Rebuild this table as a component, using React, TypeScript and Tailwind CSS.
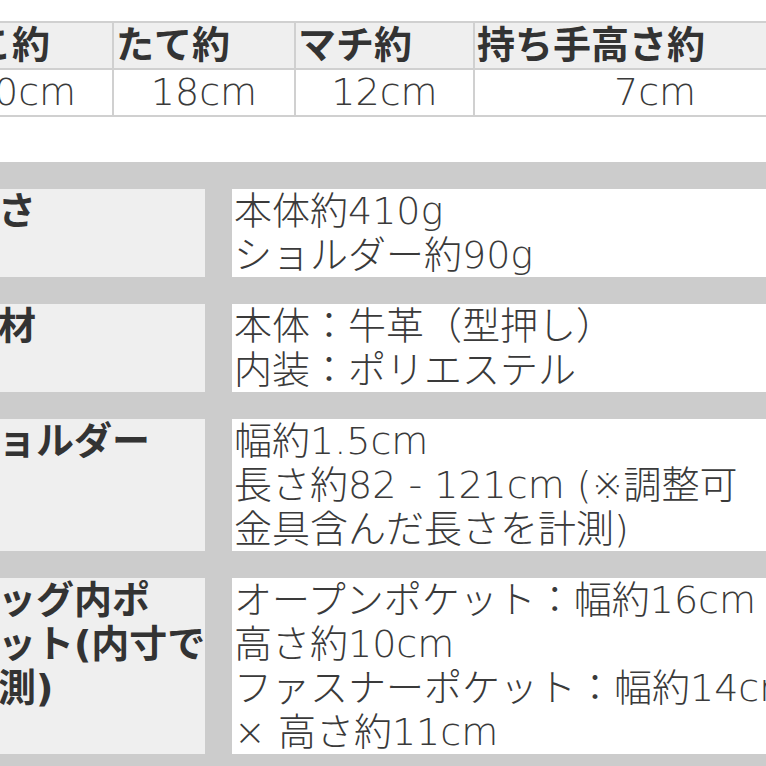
import React from "react";

const FONT = { fontFamily: '"DejaVu Sans", "Noto Sans CJK JP", sans-serif' };

function Lines({ lines }: { lines: string[] }) {
  return (
    <>
      {lines.map((l, i) => (
        <div key={i} className="whitespace-nowrap">
          {l}
        </div>
      ))}
    </>
  );
}

const rows: { label: string[]; value: string[] }[] = [
  { label: ["重さ"], value: ["本体約410g", "ショルダー約90g"] },
  { label: ["素材"], value: ["本体：牛革（型押し）", "内装：ポリエステル"] },
  {
    label: ["ショルダー"],
    value: ["幅約1.5cm", "長さ約82 - 121cm (※調整可", "金具含んだ長さを計測)"],
  },
  {
    label: ["バッグ内ポ", "ケット(内寸で", "計測)"],
    value: ["オープンポケット：幅約16cm", "高さ約10cm", "ファスナーポケット：幅約14cm", "× 高さ約11cm"],
  },
];

export default function App() {
  return (
    <div
      className="w-[766px] h-[766px] overflow-hidden bg-white text-[#333333]"
      style={FONT}
    >
      {/* top size table */}
      <div className="mt-[21px] ml-[-68px] w-max grid grid-cols-[178px_180px_177px_360px] gap-[2px] p-[2px] bg-[#d0d0d0] text-[38px] leading-[45px]">
        {["よこ約", "たて約", "マチ約", "持ち手高さ約"].map((h) => (
          <div key={h} className="h-[45px] bg-[#efefef] px-[2px] font-bold whitespace-nowrap">
            {h}
          </div>
        ))}
        {["30cm", "18cm", "12cm", "7cm"].map((v) => (
          <div key={v} className="h-[45px] bg-white text-center whitespace-nowrap font-light text-[#3a3a3a]">
            {v}
          </div>
        ))}
      </div>

      {/* spec table */}
      <div className="mt-[45px] ml-[-69px] w-max bg-[#cccccc] pt-[27px] pl-[27px] pb-[40px] grid grid-cols-[247px_620px] gap-x-[27px] gap-y-[27px] text-[38px] leading-[44px]">
        {rows.map((r, i) => (
          <React.Fragment key={i}>
            <div className="bg-[#efefef] px-[2px] font-bold text-[#333333]">
              <Lines lines={r.label} />
            </div>
            <div className="bg-white px-[2px] font-light text-[#3a3a3a]">
              <Lines lines={r.value} />
            </div>
          </React.Fragment>
        ))}
      </div>
    </div>
  );
}
